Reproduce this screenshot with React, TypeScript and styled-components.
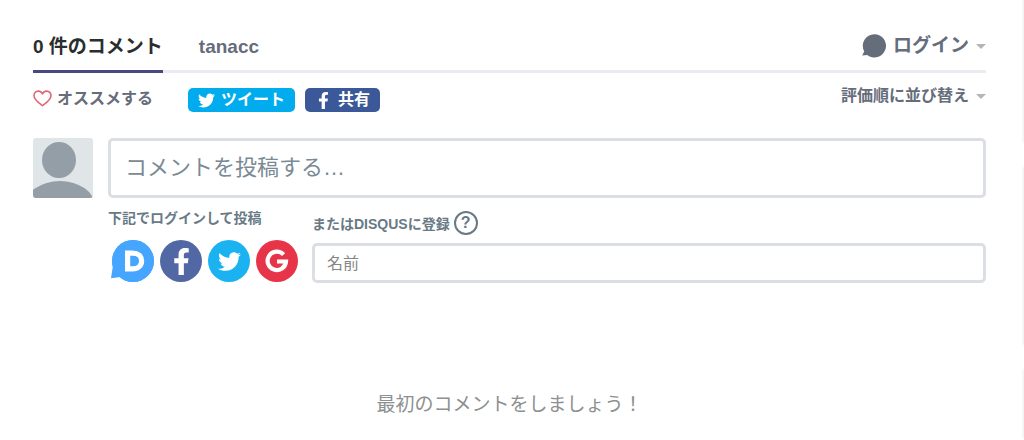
import React from "react";
import styled, { createGlobalStyle } from "styled-components";
import { FaFacebookF, FaTwitter } from "react-icons/fa";

const GlobalStyle = createGlobalStyle`
  *, *::before, *::after { box-sizing: border-box; }
  body {
    margin: 0;
    background: #fff;
    color: #656c7a;
    font-family: "Liberation Sans", "Noto Sans CJK JP", sans-serif;
  }
  button, input, textarea { font-family: inherit; }
`;

const Page = styled.div`
  display: flex;
  min-height: 100vh;
`;

const Thread = styled.main`
  flex: 1;
  min-width: 0;
  padding: 22px 36px 20px 33px;
`;

const Sidebar = styled.aside`
  width: 2px;
  overflow: hidden;
  display: flex;
  flex-direction: column;
  gap: 22px;
`;

const SideCard = styled.div<{ $size: string; $first?: boolean }>`
  flex: ${(p) => p.$size};
  width: 24px;
  border: 2px solid #f5f5f6;
  border-top-width: ${(p) => (p.$first ? 0 : 2)}px;
  border-radius: ${(p) => (p.$first ? "0 0 4px 4px" : "4px")};
`;

const Bar = styled.nav`
  display: flex;
  justify-content: space-between;
  height: 51px;
  border-bottom: 3px solid #eaebf0;
`;

const Tabs = styled.div`
  display: flex;
  gap: 36px;
`;

const Tab = styled.a<{ $active?: boolean }>`
  height: 51px;
  line-height: 50px;
  font-size: 19px;
  font-weight: 700;
  text-decoration: none;
  white-space: nowrap;
  color: ${(p) => (p.$active ? "#2a2e2e" : "#656c7a")};
  border-bottom: 3px solid ${(p) => (p.$active ? "#48497f" : "transparent")};
`;

const MenuButton = styled.button<{ $size: number }>`
  display: flex;
  align-items: center;
  gap: 7px;
  padding: 0;
  border: 0;
  background: none;
  color: #656c7a;
  font-size: ${(p) => p.$size}px;
  line-height: 24px;
  font-weight: 700;
  white-space: nowrap;
`;

const Caret = styled.span`
  border: 5px solid transparent;
  border-top-color: #b5b5b5;
  border-bottom-width: 0;
`;

const Actions = styled.div`
  display: flex;
  align-items: flex-start;
  justify-content: space-between;
  height: 65px;
  padding-top: 11px;
`;

const ActionGroup = styled.div`
  display: flex;
  align-items: center;
  gap: 10px;
  padding-top: 4px;
`;

const Recommend = styled.button`
  display: flex;
  align-items: center;
  gap: 5px;
  margin-right: 25px;
  padding: 0 0 3px;
  border: 0;
  background: none;
  color: #656c7a;
  font-size: 16px;
  line-height: 21px;
  font-weight: 700;
`;

const ShareButton = styled.button<{ $color: string }>`
  display: flex;
  align-items: center;
  gap: 6px;
  height: 24px;
  padding: 0 10px;
  border: 0;
  border-radius: 5px;
  background: ${(p) => p.$color};
  color: #fff;
  font-size: 16px;
  line-height: 24px;
  font-weight: 700;
`;

const Composer = styled.form`
  display: grid;
  grid-template-columns: 60px 1fr;
  column-gap: 15px;
`;

const Avatar = styled.svg`
  width: 60px;
  height: 60px;
  border-radius: 3px;
  background: #e0e5e8;
`;

const Message = styled.textarea`
  display: block;
  width: 100%;
  height: 60px;
  padding: 11px 14px 9px;
  border: 3px solid #dbdfe4;
  border-radius: 5px;
  resize: none;
  outline: none;
  overflow: hidden;
  color: #2a2e2e;
  font-size: 22px;
  line-height: 32px;
  &::placeholder { color: #7a8a94; opacity: 1; }
`;

const AuthRow = styled.div`
  grid-column: 2;
  display: grid;
  grid-template-columns: 189px 1fr;
  column-gap: 15px;
  padding-top: 10px;
`;

const AuthTitle = styled.h2`
  margin: 0;
  color: #687a86;
  font-size: 14px;
  line-height: 20px;
  font-weight: 700;
  white-space: nowrap;
`;

const Providers = styled.div`
  display: flex;
  gap: 6px;
  padding: 12px 0 0 4px;
`;

const Provider = styled.button<{ $color: string }>`
  display: flex;
  align-items: center;
  justify-content: center;
  flex: none;
  width: 42px;
  height: 42px;
  padding: 0;
  border: 0;
  border-radius: 50%;
  background: ${(p) => p.$color};
  color: #fff;
  svg { overflow: visible; }
`;

const Register = styled.div`
  padding-top: 3px;
`;

const RegisterLabel = styled.div`
  display: flex;
  align-items: center;
  gap: 4px;
  height: 24px;
  margin-bottom: 8px;
  color: #687a86;
  font-size: 14px;
  font-weight: 700;
  white-space: nowrap;
`;

const Help = styled.button`
  width: 24px;
  height: 24px;
  padding: 0;
  border: 2px solid #687a86;
  border-radius: 50%;
  background: none;
  color: #687a86;
  font-size: 16px;
  line-height: 20px;
  font-weight: 700;
`;

const NameInput = styled.input`
  display: block;
  width: 100%;
  height: 40px;
  padding: 2px 12px 0;
  border: 3px solid #dbdfe4;
  border-radius: 5px;
  outline: none;
  color: #2a2e2e;
  font-size: 16px;
  &::placeholder { color: #858585; opacity: 1; }
`;

const Empty = styled.p`
  margin: 108px 0 0;
  text-align: center;
  color: #8d9090;
  font-size: 19px;
  line-height: 28px;
`;

const SpeechBubble = () => (
  <svg width="24" height="24" viewBox="0 0 24 24" aria-hidden="true">
    <path fill="#656c7a" d="M12.4 0.2a11.6 11.6 0 1 1-7.2 20.7L0.2 21.6l2-4.2A11.6 11.6 0 0 1 12.4 0.2z" />
  </svg>
);

const Heart = () => (
  <svg width="19" height="17" viewBox="0 0 19 17" aria-hidden="true">
    <path
      fill="none"
      stroke="#e2647a"
      strokeWidth="1.6"
      strokeLinejoin="round"
      d="M9.5 15.7C6.6 13.6 1 10 1 5.6 1 3 2.9 1.1 5.3 1.1c1.8 0 3.3 1 4.2 2.7.9-1.7 2.4-2.7 4.2-2.7C16.1 1.1 18 3 18 5.6c0 4.4-5.6 8-8.5 10.1z"
    />
  </svg>
);

const DisqusMark = () => (
  <svg width="42" height="42" viewBox="0 0 42 42" aria-hidden="true">
    <path fill="#46a5ff" d="M1 25.5 -1 38.2l9.5-1.1z" />
    <circle cx="21" cy="21" r="21" fill="#46a5ff" />
    <path
      fill="none"
      stroke="#fff"
      strokeWidth="5.2"
      d="M15.6 13.2h5c5.6 0 9 3 9 7.7s-3.4 7.9-9 7.9h-5z"
    />
  </svg>
);

const GoogleMark = () => (
  <svg width="24" height="24" viewBox="-12 -12 24 24" aria-hidden="true">
    <path fill="none" stroke="#fff" strokeWidth="4.2" d="M6.6-6.4A9.2 9.2 0 1 0 9 0.5H0" />
  </svg>
);

export default function App() {
  return (
    <>
      <GlobalStyle />
      <Page>
        <Thread>
          <Bar>
            <Tabs>
              <Tab href="#comments" $active>0 件のコメント</Tab>
              <Tab href="#tanacc">tanacc</Tab>
            </Tabs>
            <MenuButton type="button" $size={19}>
              <SpeechBubble />
              ログイン
              <Caret />
            </MenuButton>
          </Bar>
          <Actions>
            <ActionGroup>
              <Recommend type="button">
                <Heart />
                オススメする
              </Recommend>
              <ShareButton type="button" $color="#00aced">
                <FaTwitter size={17} />
                ツイート
              </ShareButton>
              <ShareButton type="button" $color="#3b5998">
                <FaFacebookF size={17} />
                共有
              </ShareButton>
            </ActionGroup>
            <MenuButton type="button" $size={16}>
              評価順に並び替え
              <Caret />
            </MenuButton>
          </Actions>
          <Composer>
            <Avatar viewBox="0 0 60 60" role="img" aria-label="avatar">
              <ellipse cx="26" cy="22" rx="17" ry="18" fill="#949ea7" />
              <ellipse cx="27" cy="68" rx="35" ry="25" fill="#949ea7" />
            </Avatar>
            <Message aria-label="コメント" placeholder="コメントを投稿する…" />
            <AuthRow>
              <div>
                <AuthTitle>下記でログインして投稿</AuthTitle>
                <Providers>
                  <Provider type="button" $color="#46a5ff" aria-label="Disqus"><DisqusMark /></Provider>
                  <Provider type="button" $color="#5168a4" aria-label="Facebook"><FaFacebookF size={27} /></Provider>
                  <Provider type="button" $color="#1ab2f1" aria-label="Twitter"><FaTwitter size={23} /></Provider>
                  <Provider type="button" $color="#e73449" aria-label="Google"><GoogleMark /></Provider>
                </Providers>
              </div>
              <Register>
                <RegisterLabel>
                  <label htmlFor="name">またはDISQUSに登録</label>
                  <Help type="button">?</Help>
                </RegisterLabel>
                <NameInput id="name" type="text" placeholder="名前" />
              </Register>
            </AuthRow>
          </Composer>
          <Empty>最初のコメントをしましょう！</Empty>
        </Thread>
        <Sidebar>
          <SideCard $size="0 0 144px" $first />
          <SideCard $size="0 0 180px" />
          <SideCard $size="1" />
        </Sidebar>
      </Page>
    </>
  );
}
